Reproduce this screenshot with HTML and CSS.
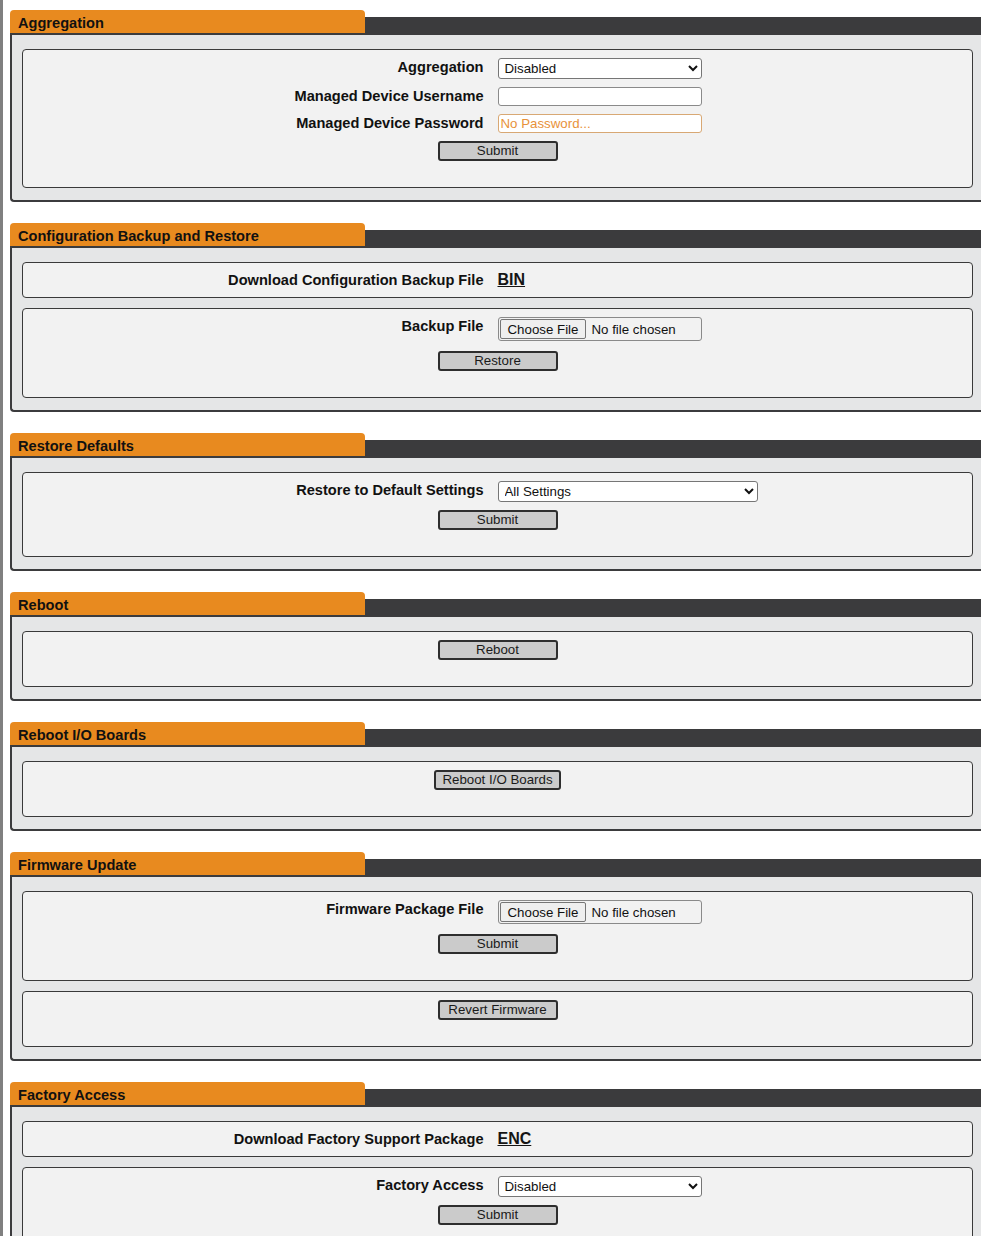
FILE: index.html
```html
<!DOCTYPE html>
<html>
<head>
<meta charset="utf-8">
<link rel="stylesheet" href="styles.css">
</head>
<body>
<div class="page">

  <section class="sec">
    <div class="head"><div class="tab">Aggregation</div><div class="fill"></div></div>
    <div class="panel">
      <div class="box">
        <div class="row"><label class="lbl">Aggregation</label><div class="ctl"><select class="sel"><option>Disabled</option></select></div></div>
        <div class="row"><label class="lbl">Managed Device Username</label><div class="ctl"><input class="txt" type="text"></div></div>
        <div class="row"><label class="lbl">Managed Device Password</label><div class="ctl"><input class="txt pw" type="password" placeholder="No Password..."></div></div>
        <div class="btnrow"><button class="btn">Submit</button></div>
      </div>
    </div>
  </section>

  <section class="sec">
    <div class="head"><div class="tab">Configuration Backup and Restore</div><div class="fill"></div></div>
    <div class="panel">
      <div class="box">
        <div class="row"><label class="lbl">Download Configuration Backup File</label><div class="ctl"><a class="dl" href="#">BIN</a></div></div>
      </div>
      <div class="box">
        <div class="row filerow"><label class="lbl">Backup File</label><div class="ctl"><input class="file" type="file"></div></div>
        <div class="btnrow"><button class="btn">Restore</button></div>
      </div>
    </div>
  </section>

  <section class="sec">
    <div class="head"><div class="tab">Restore Defaults</div><div class="fill"></div></div>
    <div class="panel">
      <div class="box">
        <div class="row"><label class="lbl">Restore to Default Settings</label><div class="ctl"><select class="sel wide"><option>All Settings</option></select></div></div>
        <div class="btnrow"><button class="btn">Submit</button></div>
      </div>
    </div>
  </section>

  <section class="sec">
    <div class="head"><div class="tab">Reboot</div><div class="fill"></div></div>
    <div class="panel">
      <div class="box">
        <div class="btnrow"><button class="btn">Reboot</button></div>
      </div>
    </div>
  </section>

  <section class="sec">
    <div class="head"><div class="tab">Reboot I/O Boards</div><div class="fill"></div></div>
    <div class="panel">
      <div class="box">
        <div class="btnrow"><button class="btn">Reboot I/O Boards</button></div>
      </div>
    </div>
  </section>

  <section class="sec">
    <div class="head"><div class="tab">Firmware Update</div><div class="fill"></div></div>
    <div class="panel">
      <div class="box">
        <div class="row filerow"><label class="lbl">Firmware Package File</label><div class="ctl"><input class="file" type="file"></div></div>
        <div class="btnrow"><button class="btn">Submit</button></div>
      </div>
      <div class="box">
        <div class="btnrow"><button class="btn">Revert Firmware</button></div>
      </div>
    </div>
  </section>

  <section class="sec">
    <div class="head"><div class="tab">Factory Access</div><div class="fill"></div></div>
    <div class="panel">
      <div class="box">
        <div class="row"><label class="lbl">Download Factory Support Package</label><div class="ctl"><a class="dl" href="#">ENC</a></div></div>
      </div>
      <div class="box">
        <div class="row"><label class="lbl">Factory Access</label><div class="ctl"><select class="sel"><option>Disabled</option></select></div></div>
        <div class="btnrow"><button class="btn">Submit</button></div>
      </div>
    </div>
  </section>

</div>
</body>
</html>
```

FILE: styles.css
```css
html, body {
  margin: 0;
  padding: 0;
  background: #ffffff;
}
body {
  font-family: "Liberation Sans", Arial, sans-serif;
  color: #111111;
}
.page {
  border-left: 3px solid #808080;
  padding: 10px 0 0 7px;
  min-height: 1300px;
}
.sec {
  margin-bottom: 21px;
}
.head {
  display: flex;
  align-items: flex-end;
  border-bottom: 2px solid #3b3b3d;
}
.tab {
  width: 347px;
  height: 23px;
  line-height: 26px;
  padding-left: 8px;
  background: #e88a1f;
  border-radius: 4px 4px 0 0;
  font-weight: bold;
  font-size: 14.6px;
  color: #111111;
  white-space: nowrap;
}
.fill {
  flex: 1;
  height: 16px;
  background: #3b3b3d;
}
.panel {
  background: #e5e6e7;
  border-left: 2px solid #3b3b3d;
  border-bottom: 2px solid #3b3b3d;
  border-bottom-left-radius: 4px;
  padding: 14px 8px 12px 10px;
  display: flex;
  flex-direction: column;
  gap: 10px;
}
.box {
  background: #f2f2f2;
  border: 1px solid #3a3a3a;
  border-radius: 4px;
  padding: 8px 0 8px 0;
  display: flex;
  flex-direction: column;
  gap: 8px;
}
.row {
  display: grid;
  grid-template-columns: 1fr 1fr;
  align-items: start;
}
.lbl {
  text-align: right;
  padding-right: 14px;
  font-weight: bold;
  font-size: 14.6px;
  line-height: 18px;
  white-space: nowrap;
}
.ctl {
  display: flex;
  align-items: center;
}
.sel {
  width: 204px;
  height: 21px;
  font-family: "Liberation Sans", Arial, sans-serif;
  font-size: 13.3px;
  color: #111111;
  background: #ffffff;
  border: 1px solid #767676;
  border-radius: 3px;
  padding: 0 2px;
  margin: 0;
}
.sel.wide {
  width: 260px;
}
.txt {
  box-sizing: border-box;
  width: 204px;
  height: 19px;
  font-family: "Liberation Sans", Arial, sans-serif;
  font-size: 13.3px;
  background: #ffffff;
  border: 1px solid #8a8a8a;
  border-radius: 3px;
  padding: 0 2px;
  margin: 0;
}
.txt.pw {
  border-color: #d8a874;
}
.txt.pw::placeholder {
  color: #e8923a;
  opacity: 1;
}
.dl {
  font-weight: bold;
  font-size: 16px;
  line-height: 18px;
  color: #151515;
  text-decoration: underline;
}
.file {
  box-sizing: border-box;
  width: 204px;
  height: 24px;
  font-family: "Liberation Sans", Arial, sans-serif;
  font-size: 13.3px;
  color: #111111;
  border: 1px solid #8a8a8a;
  border-radius: 3px;
  padding: 1px 1px;
  background: #f2f2f2;
  margin: 0;
}
.file::file-selector-button {
  font-family: "Liberation Sans", Arial, sans-serif;
  font-size: 13.3px;
  color: #111111;
  background: #efefef;
  border: 1px solid #767676;
  border-radius: 2px;
  height: 20px;
  padding: 0 7px;
  margin-right: 5px;
}
.filerow {
  margin-bottom: 2px;
}
.btnrow {
  display: flex;
  justify-content: center;
  margin-bottom: 18px;
}
.btn {
  box-sizing: border-box;
  min-width: 120px;
  height: 20px;
  padding: 0 6px;
  font-family: "Liberation Sans", Arial, sans-serif;
  font-size: 13.3px;
  line-height: 16px;
  color: #1a1a1a;
  background: #cbcbcb;
  border: 2px solid #2e2e2e;
  border-radius: 3px;
  margin: 0;
}
```
